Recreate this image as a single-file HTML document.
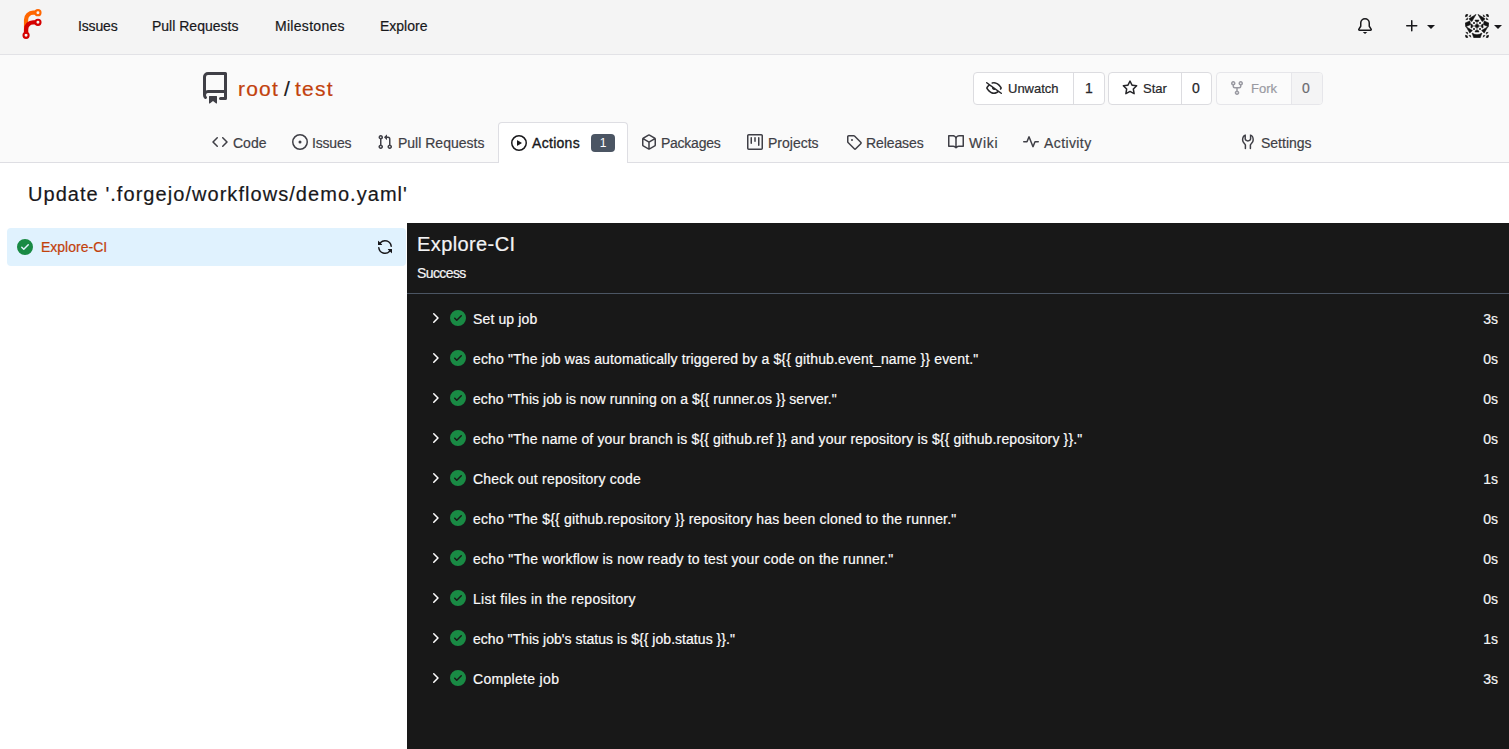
<!DOCTYPE html>
<html><head><meta charset="utf-8">
<style>
*{box-sizing:border-box;margin:0;padding:0}
html,body{width:1509px;height:749px;overflow:hidden;background:#fff;font-family:"Liberation Sans",sans-serif;color:#18181b;font-size:14px}
.nt,.tab,#title,.step .txt,.step .dur,#job div,#console>div,.btn span,#hdr>div{-webkit-text-stroke:0.2px currentColor}
.abs{position:absolute}
svg{display:block}
#nav{position:absolute;left:0;top:0;width:1509px;height:55px;background:#f4f4f4;border-bottom:1px solid #e2e2e6}
.nt{position:absolute;top:18px;font-size:14px;line-height:17px;color:#18181b;white-space:nowrap}
#hdr{position:absolute;left:0;top:55px;width:1509px;height:108px;background:#fafafa;border-bottom:1px solid #dedee3}
.btn{position:absolute;top:17px;height:33px;border:1px solid #dcdce0;border-radius:4px;background:#fff;display:flex}
.tab{position:absolute;top:80px;font-size:14px;line-height:17px;color:#3f3f46;white-space:nowrap}
#title{position:absolute;left:28px;top:182px;font-size:20px;line-height:24px;letter-spacing:1.05px;color:#18181b;white-space:nowrap}
#job{position:absolute;left:7px;top:228px;width:399px;height:38px;background:#e0f2fe;border-radius:4px}
#console{position:absolute;left:407px;top:223px;width:1102px;height:526px;background:#181818;color:#f4f4f5}
.step{position:absolute;left:0;width:1102px;height:40px}
.step .txt{position:absolute;left:66px;top:13px;letter-spacing:0.13px;font-size:14px;line-height:17px;white-space:nowrap;color:#fafafa}
.step .dur{position:absolute;right:11px;top:13px;font-size:14px;line-height:17px;color:#f4f4f5}
.step .chev{position:absolute;left:20px;top:12px}
.step .ok{position:absolute;left:43px;top:12px}
</style></head><body>

<div id="nav">
  <svg class="abs" style="left:17px;top:9px" width="30" height="30" viewBox="0 0 212 212"><g transform="translate(6,6)" fill="none"><path d="M58 168 v-98 a50 50 0 0 1 50-50 h20" stroke="#ff6600" stroke-width="30"/><path d="M58 168 v-30 a50 50 0 0 1 50-50 h20" stroke="#d40000" stroke-width="30"/><circle cx="142" cy="20" r="18" stroke="#ff6600" stroke-width="15"/><circle cx="142" cy="88" r="18" stroke="#d40000" stroke-width="15"/><circle cx="58" cy="180" r="18" stroke="#d40000" stroke-width="15"/></g></svg>
  <div class="nt" style="left:78px;letter-spacing:-0.15px">Issues</div>
  <div class="nt" style="left:152px">Pull Requests</div>
  <div class="nt" style="left:275px;letter-spacing:0.3px">Milestones</div>
  <div class="nt" style="left:380px">Explore</div>
<svg class="abs" style="left:1357px;top:18px" width="16" height="16" viewBox="0 0 16 16" fill="#18181b"><path d="M3 5a5 5 0 0 1 10 0v2.947c0 .05.015.098.042.139l1.703 2.555A1.519 1.519 0 0 1 13.482 13H2.518a1.516 1.516 0 0 1-1.263-2.36l1.703-2.554A.255.255 0 0 0 3 7.947Zm5-3.5A3.5 3.5 0 0 0 4.5 5v2.947c0 .346-.102.683-.294.97l-1.703 2.556a.017.017 0 0 0-.003.01l.001.006c0 .002.002.004.004.006l.006.004.007.001h10.964l.007-.001.006-.004.004-.006.001-.007a.017.017 0 0 0-.003-.01l-1.703-2.554a1.745 1.745 0 0 1-.294-.97V5A3.5 3.5 0 0 0 8 1.5Z"/><path d="M5.8 14h4.5L8 16Z"/></svg>
<svg class="abs" style="left:1404px;top:18px" width="16" height="16" viewBox="0 0 16 16" fill="#18181b"><path d="M7.75 2a.75.75 0 0 1 .75.75V7h4.25a.75.75 0 0 1 0 1.5H8.5v4.25a.75.75 0 0 1-1.5 0V8.5H2.75a.75.75 0 0 1 0-1.5H7V2.75A.75.75 0 0 1 7.75 2Z"/></svg>
<div class="abs" style="left:1427px;top:25px;width:0;height:0;border-left:4px solid transparent;border-right:4px solid transparent;border-top:4px solid #18181b"></div>
<svg class="abs" style="left:1465px;top:14px" width="24" height="24" viewBox="0 0 24 24" fill="#111" stroke="#111" stroke-width="0.6" stroke-linejoin="round"><g><path d="M1 0.4L2.7 0.2L2.2 2.3L0.2 2.7Z M5.7 0.8L4 2.6L5.5 2.5Z M2.7 3.9L0.8 5.6L2.6 5.5Z"/><g transform="translate(0,24) scale(1,-1)"><path d="M1 0.4L2.7 0.2L2.2 2.3L0.2 2.7Z M5.7 0.8L4 2.6L5.5 2.5Z M2.7 3.9L0.8 5.6L2.6 5.5Z"/></g><path d="M11 0.4L4.2 4.6L4.6 5.6L6.8 7.6Z"/><path d="M0.2 9L4.9 6.9L5.5 10.6L0.7 12.8Z"/><path d="M1.2 12.8L7.4 16.5L4.8 19Z"/><path d="M6 10V14L7.4 13.3Q7.9 12 7.4 10.7Z"/></g><g transform="translate(24,0) scale(-1,1)"><path d="M1 0.4L2.7 0.2L2.2 2.3L0.2 2.7Z M5.7 0.8L4 2.6L5.5 2.5Z M2.7 3.9L0.8 5.6L2.6 5.5Z"/><g transform="translate(0,24) scale(1,-1)"><path d="M1 0.4L2.7 0.2L2.2 2.3L0.2 2.7Z M5.7 0.8L4 2.6L5.5 2.5Z M2.7 3.9L0.8 5.6L2.6 5.5Z"/></g><path d="M11 0.4L4.2 4.6L4.6 5.6L6.8 7.6Z"/><path d="M0.2 9L4.9 6.9L5.5 10.6L0.7 12.8Z"/><path d="M1.2 12.8L7.4 16.5L4.8 19Z"/><path d="M6 10V14L7.4 13.3Q7.9 12 7.4 10.7Z"/></g><path d="M7.1 19.1Q12 22.3 16.9 19.1L15.2 23.8H8.8Z"/><path d="M10 6.1H14L13.4 7.4Q12 7.9 10.6 7.4Z M10 17.9H14L13.4 16.6Q12 16.1 10.6 16.6Z"/><circle cx="12" cy="12" r="1.8"/><g opacity="0.5" stroke="none"><rect x="11.4" y="8" width="1.2" height="2"/><rect x="11.4" y="14" width="1.2" height="2"/><rect x="8" y="11.4" width="2" height="1.2"/><rect x="14" y="11.4" width="2" height="1.2"/></g><g stroke="none"><circle cx="9" cy="9" r="1"/><circle cx="15" cy="9" r="1"/><circle cx="9" cy="15" r="1"/><circle cx="15" cy="15" r="1"/></g></svg>
<div class="abs" style="left:1494px;top:25px;width:0;height:0;border-left:4px solid transparent;border-right:4px solid transparent;border-top:4px solid #18181b"></div>
</div>

<div id="hdr">
<svg class="abs" style="left:199px;top:17px" width="32" height="32" viewBox="0 0 16 16" fill="#3f3f46"><path d="M2 2.5A2.5 2.5 0 0 1 4.5 0h8.75a.75.75 0 0 1 .75.75v12.5a.75.75 0 0 1-.75.75h-2.5a.75.75 0 0 1 0-1.5h1.75v-2h-8a1 1 0 0 0-.714 1.7.75.75 0 1 1-1.072 1.05A2.495 2.495 0 0 1 2 11.5Zm10.5-1h-8a1 1 0 0 0-1 1v6.708A2.486 2.486 0 0 1 4.5 9h8ZM5 12.25a.25.25 0 0 1 .25-.25h3.5a.25.25 0 0 1 .25.25v3.25a.25.25 0 0 1-.4.2l-1.45-1.087a.249.249 0 0 0-.3 0L5.4 15.7a.25.25 0 0 1-.4-.2Z"/></svg>
<div class="abs" style="left:238px;top:21px;font-size:21px;line-height:25px;letter-spacing:1.2px;white-space:nowrap;color:#c2410c">root<span style="color:#18181b;margin:0 4px 0 5px">/</span>test</div>
<div class="btn" style="left:973px;width:132px"><div style="width:100px;border-right:1px solid #dcdce0;position:relative"><svg class="abs" style="left:12px;top:7px" width="16" height="16" viewBox="0 0 16 16" fill="#27272a"><path d="M.143 2.31a.75.75 0 0 1 1.047-.167l14.5 10.5a.75.75 0 1 1-.88 1.214l-2.248-1.628C11.346 13.19 9.792 14 8 14c-1.981 0-3.670-.992-4.933-2.078C1.797 10.832.88 9.577.43 8.9a1.619 1.619 0 0 1 0-1.797c.353-.533.995-1.42 1.868-2.305L.31 3.357A.75.75 0 0 1 .143 2.31Zm1.536 5.622A.12.12 0 0 0 1.657 8c0 .021.006.045.022.068.412.621 1.242 1.75 2.366 2.717C5.175 11.758 6.527 12.5 8 12.5c1.195 0 2.31-.488 3.29-1.191L9.063 9.695A2 2 0 0 1 6.058 7.52L3.529 5.688a14.207 14.207 0 0 0-1.85 2.244ZM8 3.5c-.516 0-1.017.09-1.499.251a.75.75 0 1 1-.473-1.423A6.207 6.207 0 0 1 8 2c1.981 0 3.67.992 4.933 2.078 1.27 1.091 2.187 2.345 2.637 3.023a1.62 1.62 0 0 1 0 1.798c-.11.166-.248.365-.41.587a.75.75 0 1 1-1.21-.887c.148-.201.272-.382.371-.53a.119.119 0 0 0 0-.137c-.412-.621-1.242-1.75-2.366-2.717C10.825 4.242 9.473 3.5 8 3.5Z"/></svg><span class="abs" style="left:34px;top:8px;font-size:13px;line-height:15px;color:#27272a">Unwatch</span></div><div style="flex:1;position:relative"><span class="abs" style="left:11px;top:7px;font-size:14px;line-height:16px;color:#27272a;-webkit-text-stroke:0.25px #27272a">1</span></div></div>
<div class="btn" style="left:1108px;width:104px"><div style="width:73px;border-right:1px solid #dcdce0;position:relative"><svg class="abs" style="left:13px;top:7px" width="16" height="16" viewBox="0 0 16 16" fill="#27272a"><path d="M8 .25a.75.75 0 0 1 .673.418l1.882 3.815 4.21.612a.75.75 0 0 1 .416 1.279l-3.046 2.970.719 4.192a.751.751 0 0 1-1.088.791L8 12.347l-3.766 1.98a.75.75 0 0 1-1.088-.79l.72-4.194L.818 6.374a.75.75 0 0 1 .416-1.28l4.21-.611L7.327.668A.75.75 0 0 1 8 .25Zm0 2.445L6.615 5.5a.75.75 0 0 1-.564.41l-3.097.45 2.240 2.184a.75.75 0 0 1 .216.664l-.528 3.084 2.769-1.456a.75.75 0 0 1 .698 0l2.770 1.456-.53-3.084a.75.75 0 0 1 .216-.664l2.24-2.183-3.096-.45a.75.75 0 0 1-.564-.41L8 2.694Z"/></svg><span class="abs" style="left:34px;top:8px;font-size:13px;line-height:15px;color:#27272a">Star</span></div><div style="flex:1;position:relative"><span class="abs" style="left:10px;top:7px;font-size:14px;line-height:16px;color:#27272a;-webkit-text-stroke:0.25px #27272a">0</span></div></div>
<div class="btn" style="left:1216px;width:107px;border-color:#e6e6ea;background:#fbfbfb"><div style="width:75px;border-right:1px solid #e6e6ea;position:relative"><svg class="abs" style="left:12px;top:7px" width="16" height="16" viewBox="0 0 16 16" fill="#9a9aa2"><path d="M5 5.372v.878c0 .414.336.75.75.75h4.5a.75.75 0 0 0 .75-.75v-.878a2.25 2.25 0 1 1 1.5 0v.878a2.25 2.25 0 0 1-2.250 2.25h-1.5v2.128a2.251 2.251 0 1 1-1.5 0V8.5h-1.5A2.25 2.25 0 0 1 3.5 6.25v-.878a2.25 2.25 0 1 1 1.5 0ZM5 3.25a.75.75 0 1 0-1.5 0 .75.75 0 0 0 1.5 0Zm6.75.75a.75.75 0 1 0 0-1.5.75.75 0 0 0 0 1.5Zm-3 8.75a.75.75 0 1 0-1.5 0 .75.75 0 0 0 1.5 0Z"/></svg><span class="abs" style="left:34px;top:8px;font-size:13px;line-height:15px;color:#9a9aa2">Fork</span></div><div style="flex:1;position:relative;background:#f4f4f5;border-radius:0 3px 3px 0"><span class="abs" style="left:10px;top:7px;font-size:14px;line-height:16px;color:#6b6b70;-webkit-text-stroke:0.2px #6b6b70">0</span></div></div>
<div class="abs" style="left:498px;top:67px;width:130px;height:41px;background:#fff;border:1px solid #dedee3;border-bottom:none;border-radius:4px 4px 0 0"></div>
<svg class="abs" style="left:212px;top:79px" width="16" height="16" viewBox="0 0 16 16" fill="#3f3f46"><path d="m11.28 3.22 4.25 4.25a.75.75 0 0 1 0 1.06l-4.25 4.25a.749.749 0 0 1-1.275-.326.749.749 0 0 1 .215-.734L13.94 8l-3.72-3.72a.749.749 0 0 1 .326-1.275.749.749 0 0 1 .734.215Zm-6.560 0a.751.751 0 0 1 1.042.018.751.751 0 0 1 .018 1.042L2.06 8l3.72 3.72a.749.749 0 0 1-.326 1.275.749.749 0 0 1-.734-.215L.47 8.53a.75.75 0 0 1 0-1.06Z"/></svg>
<div class="tab" style="left:233px">Code</div>
<svg class="abs" style="left:292px;top:79px" width="16" height="16" viewBox="0 0 16 16" fill="#3f3f46"><path d="M8 9.5a1.5 1.5 0 1 0 0-3 1.5 1.5 0 0 0 0 3Z"/><path d="M8 0a8 8 0 1 1 0 16A8 8 0 0 1 8 0ZM1.5 8a6.5 6.5 0 1 0 13 0 6.5 6.5 0 0 0-13 0Z"/></svg>
<div class="tab" style="left:312px;letter-spacing:-0.2px">Issues</div>
<svg class="abs" style="left:377px;top:79px" width="16" height="16" viewBox="0 0 16 16" fill="#3f3f46"><path d="M1.5 3.25a2.25 2.25 0 1 1 3 2.122v5.256a2.251 2.251 0 1 1-1.5 0V5.372A2.25 2.25 0 0 1 1.5 3.25Zm5.677-.177L9.573.677A.25.25 0 0 1 10 .854V2.5h1A2.5 2.5 0 0 1 13.5 5v5.628a2.251 2.251 0 1 1-1.5 0V5a1 1 0 0 0-1-1h-1v1.646a.25.25 0 0 1-.427.177L7.177 3.427a.25.25 0 0 1 0-.354ZM3.75 2.5a.75.75 0 1 0 0 1.5.75.75 0 0 0 0-1.5Zm0 9.5a.75.75 0 1 0 0 1.5.75.75 0 0 0 0-1.5Zm8.25.75a.75.75 0 1 0 1.5 0 .75.75 0 0 0-1.5 0Z"/></svg>
<div class="tab" style="left:398px">Pull Requests</div>
<svg class="abs" style="left:641px;top:79px" width="16" height="16" viewBox="0 0 16 16" fill="#3f3f46"><path d="m8.878.392 5.25 3.045c.54.314.872.89.872 1.514v6.098a1.75 1.75 0 0 1-.872 1.514l-5.250 3.045a1.75 1.75 0 0 1-1.756 0l-5.25-3.045A1.75 1.75 0 0 1 1 11.049V4.951c0-.624.332-1.201.872-1.514L7.122.392a1.75 1.75 0 0 1 1.756 0ZM7.875 1.69l-4.63 2.685L8 7.133l4.755-2.758-4.63-2.685a.248.248 0 0 0-.25 0ZM2.5 5.677v5.372c0 .09.047.171.125.216l4.625 2.683V8.432Zm6.25 8.271 4.625-2.683a.25.25 0 0 0 .125-.216V5.677L8.75 8.432Z"/></svg>
<div class="tab" style="left:661px;letter-spacing:-0.25px">Packages</div>
<svg class="abs" style="left:747px;top:79px" width="16" height="16" viewBox="0 0 16 16" fill="#3f3f46"><path d="M1.75 0h12.5C15.216 0 16 .784 16 1.75v12.5A1.75 1.75 0 0 1 14.25 16H1.75A1.75 1.75 0 0 1 0 14.25V1.75C0 .784.784 0 1.75 0ZM1.5 1.75v12.5c0 .138.112.25.25.25h12.5a.25.25 0 0 0 .25-.25V1.75a.25.25 0 0 0-.25-.25H1.75a.25.25 0 0 0-.25.25ZM11.75 3a.75.75 0 0 1 .75.75v7.5a.75.75 0 0 1-1.5 0v-7.5a.75.75 0 0 1 .75-.75Zm-8.25.75a.75.75 0 0 1 1.5 0v5.5a.75.75 0 0 1-1.5 0ZM8 3a.75.75 0 0 1 .75.75v3.5a.75.75 0 0 1-1.5 0v-3.5A.75.75 0 0 1 8 3Z"/></svg>
<div class="tab" style="left:768px">Projects</div>
<svg class="abs" style="left:846px;top:79px" width="16" height="16" viewBox="0 0 16 16" fill="#3f3f46"><path d="M1 7.775V2.75C1 1.784 1.784 1 2.75 1h5.025c.464 0 .91.184 1.238.513l6.25 6.25a1.75 1.75 0 0 1 0 2.474l-5.026 5.026a1.75 1.75 0 0 1-2.474 0l-6.25-6.25A1.752 1.752 0 0 1 1 7.775Zm1.5 0c0 .066.026.13.073.177l6.25 6.25a.25.25 0 0 0 .354 0l5.025-5.025a.25.25 0 0 0 0-.354l-6.25-6.25a.25.25 0 0 0-.177-.073H2.75a.25.25 0 0 0-.25.25ZM6 5a1 1 0 1 1 0 2 1 1 0 0 1 0-2Z"/></svg>
<div class="tab" style="left:866px;letter-spacing:-0.1px">Releases</div>
<svg class="abs" style="left:948px;top:79px" width="16" height="16" viewBox="0 0 16 16" fill="#3f3f46"><path d="M0 1.75A.75.75 0 0 1 .75 1h4.253c1.227 0 2.317.59 3 1.501A3.743 3.743 0 0 1 11.006 1h4.245a.75.75 0 0 1 .75.75v10.5a.75.75 0 0 1-.75.75h-4.507a2.25 2.25 0 0 0-1.591.659l-.622.621a.75.75 0 0 1-1.06 0l-.622-.621A2.25 2.25 0 0 0 5.258 13H.75a.75.75 0 0 1-.75-.75Zm7.251 10.324.004-5.073-.002-2.253A2.25 2.25 0 0 0 5.003 2.5H1.5v9h3.757a3.75 3.75 0 0 1 1.994.574ZM8.755 4.75l-.004 7.322a3.752 3.752 0 0 1 1.992-.572H14.5v-9h-3.495a2.25 2.25 0 0 0-2.25 2.25Z"/></svg>
<div class="tab" style="left:969px;letter-spacing:0.7px">Wiki</div>
<svg class="abs" style="left:1023px;top:79px" width="16" height="16" viewBox="0 0 16 16" fill="#3f3f46"><path d="M6 2c.306 0 .582.187.696.471L10 10.731l1.304-3.26A.751.751 0 0 1 12 7h3.25a.75.75 0 0 1 0 1.5h-2.742l-1.812 4.528a.751.751 0 0 1-1.392 0L6 4.77 4.696 8.03A.75.75 0 0 1 4 8.5H.75a.75.75 0 0 1 0-1.5h2.742l1.812-4.529A.751.751 0 0 1 6 2Z"/></svg>
<div class="tab" style="left:1044px;letter-spacing:0.4px">Activity</div>
<svg class="abs" style="left:1240px;top:79px" width="16" height="16" viewBox="0 0 16 16" fill="none" stroke="#3f3f46" stroke-width="1.5" stroke-linecap="round"><path d="M5.4 14.6V10.9C5.4 9.9 2.6 8.8 2.6 5.9C2.6 3.4 3.9 1.3 5.2 1.3V4.8Q5.4 6.9 7.9 6.9Q10.4 6.9 10.6 4.8V1.3C11.9 1.3 13.2 3.4 13.2 5.9C13.2 8.8 10.4 9.9 10.4 10.9V14.6"/></svg>
<div class="tab" style="left:1261px">Settings</div>
<svg class="abs" style="left:511px;top:80px" width="16" height="16" viewBox="0 0 16 16" fill="#18181b"><path d="M8 0a8 8 0 1 1 0 16A8 8 0 0 1 8 0ZM1.5 8a6.5 6.5 0 1 0 13 0 6.5 6.5 0 0 0-13 0Zm4.879-2.773 4.264 2.559a.25.25 0 0 1 0 .428l-4.264 2.559A.25.25 0 0 1 6 10.559V5.442a.25.25 0 0 1 .379-.215Z"/></svg>
<div class="tab" style="left:532px;color:#18181b;-webkit-text-stroke:0.35px #18181b;letter-spacing:0.3px">Actions</div>
<div class="abs" style="left:591px;top:79px;width:24px;height:18px;background:#4b5563;border-radius:4px;color:#fff;font-size:12px;line-height:18px;text-align:center;-webkit-text-stroke:0">1</div>
</div>

<div id="title">Update '.forgejo/workflows/demo.yaml'</div>

<div id="job">
<svg class="abs" style="left:10px;top:11px" width="16" height="16" viewBox="0 0 16 16" fill="#198a44"><path fill-rule="evenodd" d="M8 16A8 8 0 1 1 8 0a8 8 0 0 1 0 16Zm3.78-9.72a.751.751 0 0 0-.018-1.042.751.751 0 0 0-1.042-.018L6.75 9.19 5.280 7.72a.751.751 0 0 0-1.042.018.751.751 0 0 0-.018 1.042l2 2a.75.75 0 0 0 1.06 0Z"/></svg><svg class="abs" style="left:370px;top:11px" width="16" height="16" viewBox="0 0 16 16" fill="#18181b"><path d="M1.705 8.005a.75.75 0 0 1 .834.656 5.5 5.5 0 0 0 9.592 2.97l-1.204-1.204a.25.25 0 0 1 .177-.427h3.646a.25.25 0 0 1 .25.25v3.646a.25.25 0 0 1-.427.177l-1.38-1.38A7.002 7.002 0 0 1 1.05 8.84a.75.75 0 0 1 .656-.834ZM8 2.5a5.487 5.487 0 0 0-4.131 1.869l1.204 1.204A.25.25 0 0 1 4.896 6H1.25A.25.25 0 0 1 1 5.75V2.104a.25.25 0 0 1 .427-.177l1.38 1.38A7.002 7.002 0 0 1 14.95 7.16a.75.75 0 0 1-1.49.178A5.5 5.5 0 0 0 8 2.5Z"/></svg>
  <div class="abs" style="left:34px;top:11px;font-size:14px;line-height:17px;color:#c2410c">Explore-CI</div>
</div>

<div id="console">
  <div class="abs" style="left:10px;top:9px;font-size:20px;line-height:24px;letter-spacing:0.4px">Explore-CI</div>
  <div class="abs" style="left:10px;top:42px;font-size:14px;line-height:17px;letter-spacing:-0.6px">Success</div>
  <div class="abs" style="left:0;top:70px;width:1102px;height:1px;background:#4b5563"></div>
  <div id="steps">
<div class="step" style="top:75px"><svg class="abs chev" style="left:20px;top:12px" width="16" height="16" viewBox="0 0 16 16" fill="#fff"><path d="M6.22 3.22a.75.75 0 0 1 1.06 0l4.25 4.25a.75.75 0 0 1 0 1.06l-4.250 4.25a.751.751 0 0 1-1.042-.018.751.751 0 0 1-.018-1.042L9.94 8 6.22 4.28a.75.75 0 0 1 0-1.06Z"/></svg><svg class="abs" style="left:43px;top:12px" width="16" height="16" viewBox="0 0 16 16" fill="#198a44"><path fill-rule="evenodd" d="M8 16A8 8 0 1 1 8 0a8 8 0 0 1 0 16Zm3.78-9.72a.751.751 0 0 0-.018-1.042.751.751 0 0 0-1.042-.018L6.75 9.19 5.280 7.72a.751.751 0 0 0-1.042.018.751.751 0 0 0-.018 1.042l2 2a.75.75 0 0 0 1.06 0Z"/></svg><div class="txt" style="letter-spacing:0.130px">Set up job</div><div class="dur">3s</div></div>
<div class="step" style="top:115px"><svg class="abs chev" style="left:20px;top:12px" width="16" height="16" viewBox="0 0 16 16" fill="#fff"><path d="M6.22 3.22a.75.75 0 0 1 1.06 0l4.25 4.25a.75.75 0 0 1 0 1.06l-4.250 4.25a.751.751 0 0 1-1.042-.018.751.751 0 0 1-.018-1.042L9.94 8 6.22 4.28a.75.75 0 0 1 0-1.06Z"/></svg><svg class="abs" style="left:43px;top:12px" width="16" height="16" viewBox="0 0 16 16" fill="#198a44"><path fill-rule="evenodd" d="M8 16A8 8 0 1 1 8 0a8 8 0 0 1 0 16Zm3.78-9.72a.751.751 0 0 0-.018-1.042.751.751 0 0 0-1.042-.018L6.75 9.19 5.280 7.72a.751.751 0 0 0-1.042.018.751.751 0 0 0-.018 1.042l2 2a.75.75 0 0 0 1.06 0Z"/></svg><div class="txt" style="letter-spacing:0.143px">echo "The job was automatically triggered by a ${{ github.event_name }} event."</div><div class="dur">0s</div></div>
<div class="step" style="top:155px"><svg class="abs chev" style="left:20px;top:12px" width="16" height="16" viewBox="0 0 16 16" fill="#fff"><path d="M6.22 3.22a.75.75 0 0 1 1.06 0l4.25 4.25a.75.75 0 0 1 0 1.06l-4.250 4.25a.751.751 0 0 1-1.042-.018.751.751 0 0 1-.018-1.042L9.94 8 6.22 4.28a.75.75 0 0 1 0-1.06Z"/></svg><svg class="abs" style="left:43px;top:12px" width="16" height="16" viewBox="0 0 16 16" fill="#198a44"><path fill-rule="evenodd" d="M8 16A8 8 0 1 1 8 0a8 8 0 0 1 0 16Zm3.78-9.72a.751.751 0 0 0-.018-1.042.751.751 0 0 0-1.042-.018L6.75 9.19 5.280 7.72a.751.751 0 0 0-1.042.018.751.751 0 0 0-.018 1.042l2 2a.75.75 0 0 0 1.06 0Z"/></svg><div class="txt" style="letter-spacing:0.045px">echo "This job is now running on a ${{ runner.os }} server."</div><div class="dur">0s</div></div>
<div class="step" style="top:195px"><svg class="abs chev" style="left:20px;top:12px" width="16" height="16" viewBox="0 0 16 16" fill="#fff"><path d="M6.22 3.22a.75.75 0 0 1 1.06 0l4.25 4.25a.75.75 0 0 1 0 1.06l-4.250 4.25a.751.751 0 0 1-1.042-.018.751.751 0 0 1-.018-1.042L9.94 8 6.22 4.28a.75.75 0 0 1 0-1.06Z"/></svg><svg class="abs" style="left:43px;top:12px" width="16" height="16" viewBox="0 0 16 16" fill="#198a44"><path fill-rule="evenodd" d="M8 16A8 8 0 1 1 8 0a8 8 0 0 1 0 16Zm3.78-9.72a.751.751 0 0 0-.018-1.042.751.751 0 0 0-1.042-.018L6.75 9.19 5.280 7.72a.751.751 0 0 0-1.042.018.751.751 0 0 0-.018 1.042l2 2a.75.75 0 0 0 1.06 0Z"/></svg><div class="txt" style="letter-spacing:0.150px">echo "The name of your branch is ${{ github.ref }} and your repository is ${{ github.repository }}."</div><div class="dur">0s</div></div>
<div class="step" style="top:235px"><svg class="abs chev" style="left:20px;top:12px" width="16" height="16" viewBox="0 0 16 16" fill="#fff"><path d="M6.22 3.22a.75.75 0 0 1 1.06 0l4.25 4.25a.75.75 0 0 1 0 1.06l-4.250 4.25a.751.751 0 0 1-1.042-.018.751.751 0 0 1-.018-1.042L9.94 8 6.22 4.28a.75.75 0 0 1 0-1.06Z"/></svg><svg class="abs" style="left:43px;top:12px" width="16" height="16" viewBox="0 0 16 16" fill="#198a44"><path fill-rule="evenodd" d="M8 16A8 8 0 1 1 8 0a8 8 0 0 1 0 16Zm3.78-9.72a.751.751 0 0 0-.018-1.042.751.751 0 0 0-1.042-.018L6.75 9.19 5.280 7.72a.751.751 0 0 0-1.042.018.751.751 0 0 0-.018 1.042l2 2a.75.75 0 0 0 1.06 0Z"/></svg><div class="txt" style="letter-spacing:0.213px">Check out repository code</div><div class="dur">1s</div></div>
<div class="step" style="top:275px"><svg class="abs chev" style="left:20px;top:12px" width="16" height="16" viewBox="0 0 16 16" fill="#fff"><path d="M6.22 3.22a.75.75 0 0 1 1.06 0l4.25 4.25a.75.75 0 0 1 0 1.06l-4.250 4.25a.751.751 0 0 1-1.042-.018.751.751 0 0 1-.018-1.042L9.94 8 6.22 4.28a.75.75 0 0 1 0-1.06Z"/></svg><svg class="abs" style="left:43px;top:12px" width="16" height="16" viewBox="0 0 16 16" fill="#198a44"><path fill-rule="evenodd" d="M8 16A8 8 0 1 1 8 0a8 8 0 0 1 0 16Zm3.78-9.72a.751.751 0 0 0-.018-1.042.751.751 0 0 0-1.042-.018L6.75 9.19 5.280 7.72a.751.751 0 0 0-1.042.018.751.751 0 0 0-.018 1.042l2 2a.75.75 0 0 0 1.06 0Z"/></svg><div class="txt" style="letter-spacing:0.196px">echo "The ${{ github.repository }} repository has been cloned to the runner."</div><div class="dur">0s</div></div>
<div class="step" style="top:315px"><svg class="abs chev" style="left:20px;top:12px" width="16" height="16" viewBox="0 0 16 16" fill="#fff"><path d="M6.22 3.22a.75.75 0 0 1 1.06 0l4.25 4.25a.75.75 0 0 1 0 1.06l-4.250 4.25a.751.751 0 0 1-1.042-.018.751.751 0 0 1-.018-1.042L9.94 8 6.22 4.28a.75.75 0 0 1 0-1.06Z"/></svg><svg class="abs" style="left:43px;top:12px" width="16" height="16" viewBox="0 0 16 16" fill="#198a44"><path fill-rule="evenodd" d="M8 16A8 8 0 1 1 8 0a8 8 0 0 1 0 16Zm3.78-9.72a.751.751 0 0 0-.018-1.042.751.751 0 0 0-1.042-.018L6.75 9.19 5.280 7.72a.751.751 0 0 0-1.042.018.751.751 0 0 0-.018 1.042l2 2a.75.75 0 0 0 1.06 0Z"/></svg><div class="txt" style="letter-spacing:0.208px">echo "The workflow is now ready to test your code on the runner."</div><div class="dur">0s</div></div>
<div class="step" style="top:355px"><svg class="abs chev" style="left:20px;top:12px" width="16" height="16" viewBox="0 0 16 16" fill="#fff"><path d="M6.22 3.22a.75.75 0 0 1 1.06 0l4.25 4.25a.75.75 0 0 1 0 1.06l-4.250 4.25a.751.751 0 0 1-1.042-.018.751.751 0 0 1-.018-1.042L9.94 8 6.22 4.28a.75.75 0 0 1 0-1.06Z"/></svg><svg class="abs" style="left:43px;top:12px" width="16" height="16" viewBox="0 0 16 16" fill="#198a44"><path fill-rule="evenodd" d="M8 16A8 8 0 1 1 8 0a8 8 0 0 1 0 16Zm3.78-9.72a.751.751 0 0 0-.018-1.042.751.751 0 0 0-1.042-.018L6.75 9.19 5.280 7.72a.751.751 0 0 0-1.042.018.751.751 0 0 0-.018 1.042l2 2a.75.75 0 0 0 1.06 0Z"/></svg><div class="txt" style="letter-spacing:0.315px">List files in the repository</div><div class="dur">0s</div></div>
<div class="step" style="top:395px"><svg class="abs chev" style="left:20px;top:12px" width="16" height="16" viewBox="0 0 16 16" fill="#fff"><path d="M6.22 3.22a.75.75 0 0 1 1.06 0l4.25 4.25a.75.75 0 0 1 0 1.06l-4.250 4.25a.751.751 0 0 1-1.042-.018.751.751 0 0 1-.018-1.042L9.94 8 6.22 4.28a.75.75 0 0 1 0-1.06Z"/></svg><svg class="abs" style="left:43px;top:12px" width="16" height="16" viewBox="0 0 16 16" fill="#198a44"><path fill-rule="evenodd" d="M8 16A8 8 0 1 1 8 0a8 8 0 0 1 0 16Zm3.78-9.72a.751.751 0 0 0-.018-1.042.751.751 0 0 0-1.042-.018L6.75 9.19 5.280 7.72a.751.751 0 0 0-1.042.018.751.751 0 0 0-.018 1.042l2 2a.75.75 0 0 0 1.06 0Z"/></svg><div class="txt" style="letter-spacing:0.041px">echo "This job's status is ${{ job.status }}."</div><div class="dur">1s</div></div>
<div class="step" style="top:435px"><svg class="abs chev" style="left:20px;top:12px" width="16" height="16" viewBox="0 0 16 16" fill="#fff"><path d="M6.22 3.22a.75.75 0 0 1 1.06 0l4.25 4.25a.75.75 0 0 1 0 1.06l-4.250 4.25a.751.751 0 0 1-1.042-.018.751.751 0 0 1-.018-1.042L9.94 8 6.22 4.28a.75.75 0 0 1 0-1.06Z"/></svg><svg class="abs" style="left:43px;top:12px" width="16" height="16" viewBox="0 0 16 16" fill="#198a44"><path fill-rule="evenodd" d="M8 16A8 8 0 1 1 8 0a8 8 0 0 1 0 16Zm3.78-9.72a.751.751 0 0 0-.018-1.042.751.751 0 0 0-1.042-.018L6.75 9.19 5.280 7.72a.751.751 0 0 0-1.042.018.751.751 0 0 0-.018 1.042l2 2a.75.75 0 0 0 1.06 0Z"/></svg><div class="txt" style="letter-spacing:0.312px">Complete job</div><div class="dur">3s</div></div>
</div>
</div>

</body></html>
